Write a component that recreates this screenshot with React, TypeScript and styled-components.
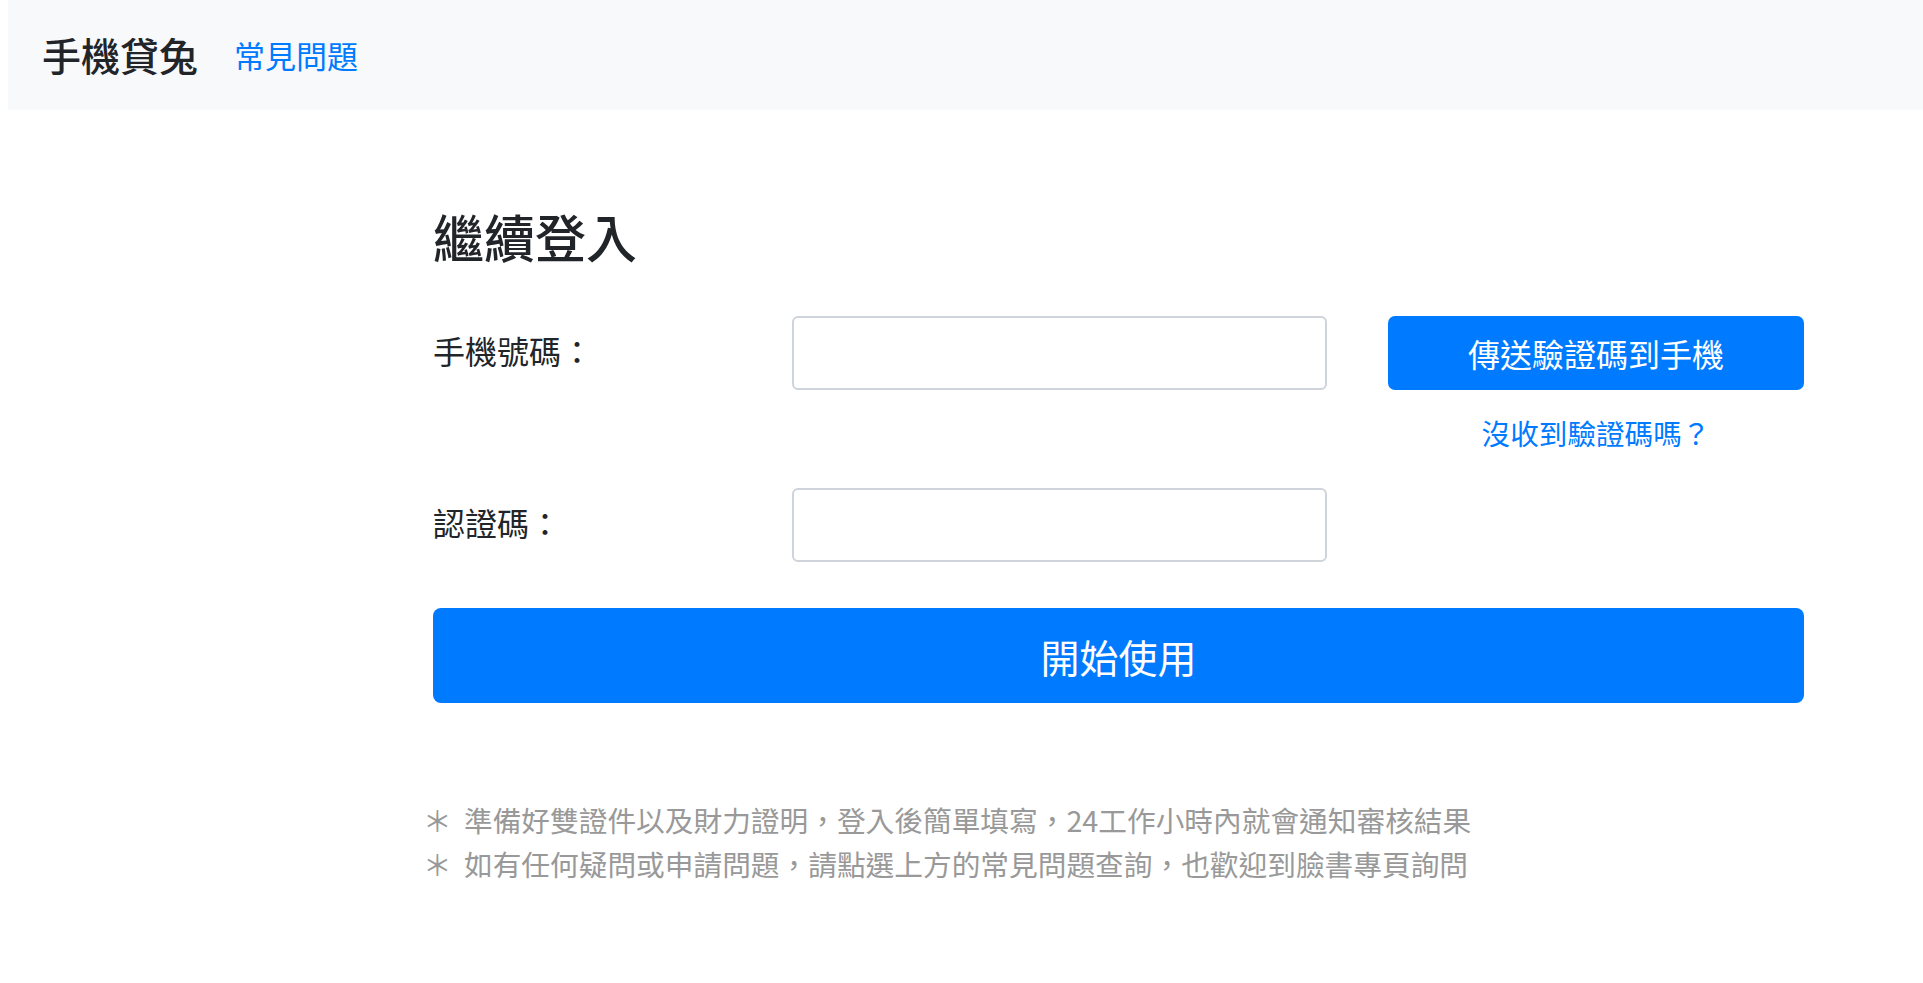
import React, { useState } from "react";
import styled, { createGlobalStyle } from "styled-components";

const GlobalStyle = createGlobalStyle`
  html, body {
    margin: 0;
    padding: 0;
    background: #ffffff;
  }
  body {
    font-family: "Noto Sans CJK TC", "Noto Sans", "Liberation Sans", sans-serif;
    color: #212529;
  }
  * {
    box-sizing: border-box;
  }
`;

const Navbar = styled.nav`
  height: 110px;
  margin-left: 8px;
  padding: 0 34px;
  display: flex;
  align-items: center;
  gap: 36px;
  background: #f8f9fa;
`;

const Brand = styled.a`
  font-size: 39px;
  line-height: 1;
  color: #212529;
  text-decoration: none;
  font-weight: 500;
  margin-top: -2px;
`;

const NavLink = styled.a`
  font-size: 31px;
  line-height: 1;
  color: #007bff;
  text-decoration: none;
  margin-top: -2px;
`;

const Main = styled.main`
  width: 1371px;
  margin-left: 433px;
  padding-top: 97px;
`;

const Title = styled.h1`
  margin: 0 0 51px;
  font-size: 51px;
  line-height: 58px;
  font-weight: 500;
  color: #212529;
`;

const Row = styled.div<{ gapBelow: number }>`
  display: grid;
  grid-template-columns: 359px 535px 1fr;
  align-items: start;
  margin-bottom: ${(p) => p.gapBelow}px;
`;

const Label = styled.label`
  height: 74px;
  display: flex;
  align-items: center;
  font-size: 32px;
  color: #212529;
  margin-top: -3px;
`;

const Input = styled.input`
  width: 100%;
  height: 74px;
  padding: 0 18px;
  font-size: 30px;
  font-family: inherit;
  border: 2px solid #ced4da;
  border-radius: 6px;
  background: #fff;
  outline: none;

  &:focus {
    border-color: #80bdff;
  }
`;

const SendColumn = styled.div`
  width: 416px;
  justify-self: end;
  display: flex;
  flex-direction: column;
  align-items: center;
`;

const PrimaryButton = styled.button<{ big?: boolean }>`
  width: 100%;
  height: ${(p) => (p.big ? 95 : 74)}px;
  border: none;
  border-radius: ${(p) => (p.big ? 8 : 7)}px;
  background: #007bff;
  color: #ffffff;
  font-family: inherit;
  font-size: ${(p) => (p.big ? 39 : 32)}px;
  cursor: pointer;

  &:hover {
    background: #0069d9;
  }
`;

const ResendLink = styled.a`
  margin-top: 21px;
  font-size: 28.6px;
  line-height: 43px;
  color: #007bff;
  text-decoration: none;
  cursor: pointer;
`;

const Notes = styled.ul`
  list-style: none;
  margin: 95px 0 0 -10px;
  padding: 0;
`;

const Note = styled.li`
  display: flex;
  font-size: 28.7px;
  line-height: 44px;
  color: #999999;
  white-space: nowrap;
`;

const Mark = styled.span`
  width: 41px;
  flex-shrink: 0;
`;

const notes = [
  "準備好雙證件以及財力證明，登入後簡單填寫，24工作小時內就會通知審核結果",
  "如有任何疑問或申請問題，請點選上方的常見問題查詢，也歡迎到臉書專頁詢問",
];

export default function App() {
  const [phone, setPhone] = useState("");
  const [code, setCode] = useState("");

  return (
    <>
      <GlobalStyle />
      <Navbar>
        <Brand href="#">手機貸兔</Brand>
        <NavLink href="#">常見問題</NavLink>
      </Navbar>

      <Main>
        <Title>繼續登入</Title>

        <Row gapBelow={34}>
          <Label htmlFor="phone">手機號碼：</Label>
          <Input id="phone" value={phone} onChange={(e) => setPhone(e.target.value)} />
          <SendColumn>
            <PrimaryButton type="button">傳送驗證碼到手機</PrimaryButton>
            <ResendLink>沒收到驗證碼嗎？</ResendLink>
          </SendColumn>
        </Row>

        <Row gapBelow={46}>
          <Label htmlFor="code">認證碼：</Label>
          <Input id="code" value={code} onChange={(e) => setCode(e.target.value)} />
        </Row>

        <PrimaryButton type="button" big>
          開始使用
        </PrimaryButton>

        <Notes>
          {notes.map((n) => (
            <Note key={n}>
              <Mark>＊</Mark>
              {n}
            </Note>
          ))}
        </Notes>
      </Main>
    </>
  );
}
